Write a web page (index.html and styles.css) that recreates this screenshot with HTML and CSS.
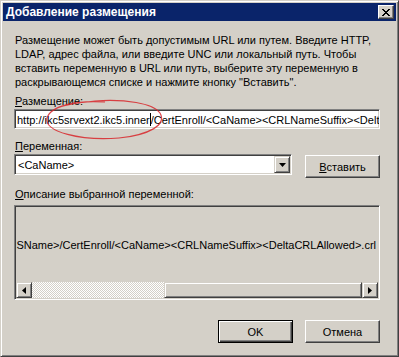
FILE: index.html
```html
<!DOCTYPE html>
<html lang="ru">
<head>
    <meta charset="UTF-8">
    <title>Добавление размещения</title>
    <link rel="stylesheet" href="styles.css">
</head>
<body>
    <div class="window">
        <!-- Заголовок окна -->
        <div class="titlebar">
            <span class="title">Добавление размещения</span>
            <span class="close-btn">
                <svg width="8" height="7" viewBox="0 0 8 7"><path d="M0 0h2v1h1v1h2v-1h1v-1h2v1h-1v1h-1v1h-1v1h1v1h1v1h1v1h-2v-1h-1v-1h-2v1h-1v1h-2v-1h1v-1h1v-1h1v-1h-1v-1h-1v-1h-1z" fill="#000"/></svg>
            </span>
        </div>

        <div class="content">
            <p class="intro">Размещение может быть допустимым URL или путем. Введите HTTP,<br>LDAP, адрес файла, или введите UNC или локальный путь. Чтобы<br>вставить переменную в URL или путь, выберите эту переменную в<br>раскрывающемся списке и нажмите кнопку "Вставить".</p>

            <div class="label"><u>Р</u>азмещение:</div>
            <div class="edit">
                <span class="edit-text">http://ikc5srvext2.ikc5.inner<span class="caret"></span>/CertEnroll/&lt;CaName&gt;&lt;CRLNameSuffix&gt;&lt;DeltaCRLAllowed&gt;.crl</span>
            </div>

            <div class="label label-gap"><u>П</u>еременная:</div>
            <div class="combo-row">
                <div class="combo">
                    <span class="combo-text">&lt;CaName&gt;</span>
                    <span class="combo-arrow">
                        <svg width="7" height="4" viewBox="0 0 7 4"><path d="M0 0h7l-3.5 4z" fill="#000"/></svg>
                    </span>
                </div>
                <button class="btn btn-insert"><u>В</u>ставить</button>
            </div>

            <div class="label label-desc"><u>О</u>писание выбранной переменной:</div>
            <div class="desc">
                <div class="desc-text">
                    <span>http://&lt;ServerDNSName&gt;/CertEnroll/&lt;CaName&gt;&lt;CRLNameSuffix&gt;&lt;DeltaCRLAllowed&gt;.crl</span>
                </div>
                <div class="hscroll">
                    <span class="sb-btn">
                        <svg width="4" height="7" viewBox="0 0 4 7"><path d="M4 0v7l-4-3.5z" fill="#000"/></svg>
                    </span>
                    <span class="sb-track"></span>
                    <span class="sb-thumb"></span>
                    <span class="sb-btn">
                        <svg width="4" height="7" viewBox="0 0 4 7"><path d="M0 0v7l4-3.5z" fill="#000"/></svg>
                    </span>
                </div>
            </div>

            <div class="footer">
                <button class="btn btn-default">OK</button>
                <button class="btn">Отмена</button>
            </div>
        </div>

        <!-- Красная пометка от руки -->
        <svg class="mark" width="399" height="357" viewBox="0 0 399 357">
            <path d="M104 101 C78 99 50 104 46 117 C43 131 80 140 118 137 C148 134 166 124 159 112 C152 102 124 98 94 100 C74 102 58 105 53 109" fill="none" stroke="#d8262a" stroke-width="1.2" opacity="0.85"/>
        </svg>
    </div>
</body>
</html>
```

FILE: styles.css
```css
/* Классическое окно Windows */
* {
    box-sizing: border-box;
}

body {
    margin: 0;
    background-color: #d4d0c8;
    font-family: "Liberation Sans", Arial, sans-serif;
    font-size: 11px;
    color: #000;
}

.window {
    width: 399px;
    height: 357px;
    border: 1px solid;
    border-color: #d4d0c8 #404040 #404040 #d4d0c8;
    box-shadow: inset 1px 1px 0 #fff, inset -1px -1px 0 #808080;
    padding: 2px;
    position: relative;
    overflow: hidden;
}

/* Заголовок */
.titlebar {
    height: 18px;
    background-color: #0a246a;
    color: #fff;
    font-weight: bold;
    font-size: 12px;
    display: flex;
    align-items: center;
    justify-content: space-between;
    padding: 0 2px 0 3px;
}

.close-btn {
    width: 16px;
    height: 14px;
    background-color: #d4d0c8;
    border: 1px solid;
    border-color: #fff #404040 #404040 #fff;
    box-shadow: inset -1px -1px 0 #808080;
    display: flex;
    align-items: center;
    justify-content: center;
}

/* Содержимое */
.content {
    padding: 12px 16px 0 11px;
}

.intro {
    margin: 0;
    padding-left: 1px;
    line-height: 14px;
}

.label {
    margin-top: 5px;
    padding-left: 1px;
    line-height: 14px;
}

.label-gap {
    margin-top: 10px;
}

.label-desc {
    margin-top: 9px;
}

.edit {
    margin-top: 1px;
    height: 20px;
    background-color: #fff;
    border: 1px solid;
    border-color: #808080 #fff #fff #808080;
    box-shadow: inset 1px 1px 0 #404040, inset -1px -1px 0 #d4d0c8;
    padding: 0 2px;
    display: flex;
    align-items: center;
    overflow: hidden;
    white-space: nowrap;
}

.caret {
    display: inline-block;
    width: 1px;
    height: 13px;
    background-color: #000;
    vertical-align: -2px;
}

.combo-row {
    display: flex;
    align-items: flex-start;
    gap: 13px;
    margin-top: 1px;
}

.combo {
    width: 278px;
    height: 21px;
    background-color: #fff;
    border: 1px solid;
    border-color: #808080 #fff #fff #808080;
    box-shadow: inset 1px 1px 0 #404040, inset -1px -1px 0 #d4d0c8;
    padding: 1px 1px 1px 3px;
    display: flex;
    align-items: center;
    justify-content: space-between;
}

.combo-arrow {
    width: 16px;
    height: 17px;
    background-color: #d4d0c8;
    border: 1px solid;
    border-color: #d4d0c8 #404040 #404040 #d4d0c8;
    box-shadow: inset 1px 1px 0 #fff, inset -1px -1px 0 #808080;
    display: flex;
    align-items: center;
    justify-content: center;
}

/* Кнопки */
.btn {
    width: 75px;
    height: 23px;
    padding: 0;
    font-family: inherit;
    font-size: 11px;
    color: #000;
    background-color: #d4d0c8;
    border: 1px solid;
    border-color: #fff #404040 #404040 #fff;
    box-shadow: inset -1px -1px 0 #808080;
}

.btn-insert {
    margin-top: 1px;
}

.btn-default {
    border-color: #000;
    box-shadow: inset 1px 1px 0 #fff, inset -1px -1px 0 #404040, inset -2px -2px 0 #808080;
}

/* Описание переменной */
.desc {
    margin-top: 4px;
    height: 95px;
    border: 1px solid;
    border-color: #808080 #fff #fff #808080;
    box-shadow: inset 1px 1px 0 #404040, inset -1px -1px 0 #d4d0c8;
    padding: 1px;
    display: flex;
    flex-direction: column;
}

.desc-text {
    flex: 1;
    display: flex;
    align-items: center;
    justify-content: flex-end;
    overflow: hidden;
    white-space: nowrap;
    padding-right: 2px;
}

.hscroll {
    height: 16px;
    display: flex;
}

.sb-btn {
    width: 16px;
    height: 16px;
    flex: none;
    background-color: #d4d0c8;
    border: 1px solid;
    border-color: #d4d0c8 #404040 #404040 #d4d0c8;
    box-shadow: inset 1px 1px 0 #fff, inset -1px -1px 0 #808080;
    display: flex;
    align-items: center;
    justify-content: center;
}

.sb-track {
    flex: 1;
    background: repeating-conic-gradient(#fff 0 25%, #d4d0c8 0 50%) 0 0 / 2px 2px;
}

.sb-thumb {
    width: 198px;
    flex: none;
    background-color: #d4d0c8;
    border: 1px solid;
    border-color: #d4d0c8 #404040 #404040 #d4d0c8;
    box-shadow: inset 1px 1px 0 #fff, inset -1px -1px 0 #808080;
}

.footer {
    display: flex;
    justify-content: flex-end;
    gap: 12px;
    margin-top: 20px;
}

/* Пометка поверх окна */
.mark {
    position: absolute;
    top: 0;
    left: 0;
    pointer-events: none;
}
```
